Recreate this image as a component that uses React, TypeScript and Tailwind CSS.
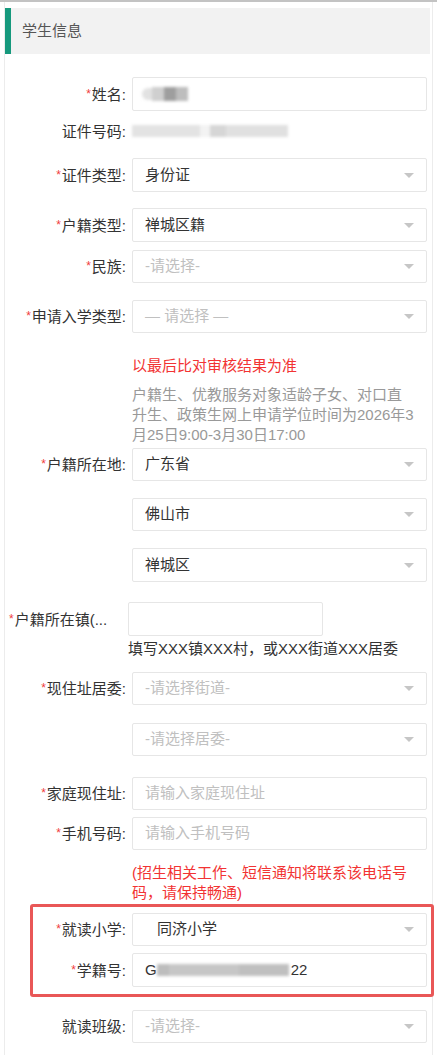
import React from "react";

const F = "font-['Liberation_Sans','Noto_Sans_CJK_SC',sans-serif]";

function Arrow() {
  return (
    <div className="ml-auto mr-[12px] w-0 h-0 border-l-[5px] border-r-[5px] border-t-[5px] border-l-transparent border-r-transparent border-t-[#c6c6c6]" />
  );
}

function Label({ text, req = true, w }: { text: string; req?: boolean; w: string }) {
  return (
    <div className={`${w} shrink-0 text-right pr-[6px] text-[15px] text-[#333] leading-none whitespace-nowrap`}>
      {req && <span className="text-[#f03c3c] text-[12px] relative top-[-2px] mr-[1px]">*</span>}
      {text}:
    </div>
  );
}

function Select({ value, placeholder, pl = "pl-[12px]", h = "h-[33px]" }: { value?: string; placeholder?: string; pl?: string; h?: string }) {
  return (
    <div className={`w-[295px] ${h} border border-[#e6e6e6] rounded-[2px] bg-white flex items-center ${pl} text-[15px]`}>
      {value ? <span className="text-[#333]">{value}</span> : <span className="text-[#c0c0c0]">{placeholder}</span>}
      <Arrow />
    </div>
  );
}

function Input({ value, placeholder, children, h = "h-[33px]" }: { value?: string; placeholder?: string; children?: React.ReactNode; h?: string }) {
  return (
    <div className={`w-[295px] ${h} border border-[#e6e6e6] rounded-[2px] bg-white flex items-center pl-[12px] text-[15px]`}>
      {children ? children : value ? <span className="text-[#333]">{value}</span> : <span className="text-[#c0c0c0]">{placeholder}</span>}
    </div>
  );
}

export default function App() {
  const W = "w-[127px]";
  const WB = "w-[99px]";
  return (
    <div className={`${F} w-[437px] min-h-[1055px] bg-white`}>
      <div className="h-[2px] bg-[#c3c3c3]" />
      <div className="ml-[4px] w-[429px] border-l border-r border-[#ececec] pt-[6px] pb-[12px]">
        {/* header */}
        <div className="w-[425px] h-[46px] bg-[#f2f2f2] border-l-[6px] border-[#16997d] flex items-center pl-[11px] text-[15px] text-[#555]">
          学生信息
        </div>

        {/* 姓名 */}
        <div className="mt-[23px] flex items-center">
          <Label text="姓名" w={W} />
          <Input h="h-[34px]">
            <div className="flex items-center blur-[1.5px] ml-[-3px]">
              <div className="w-[10px] h-[12px] bg-[#e2e2e2] rounded-l-full" />
              <div className="w-[12px] h-[14px] bg-[#cfcfcf]" />
              <div className="w-[12px] h-[14px] bg-[#9e9e9e]" />
              <div className="w-[12px] h-[14px] bg-[#bdbdbd]" />
            </div>
          </Input>
        </div>

        {/* 证件号码 */}
        <div className="mt-[10px] h-[20px] flex items-center">
          <Label text="证件号码" req={false} w={W} />
          <div className="flex items-center blur-[1.5px]">
            <div className="w-[68px] h-[12px] bg-[#e3e3e3]" />
            <div className="w-[10px] h-[12px] bg-[#f3f3f3]" />
            <div className="w-[16px] h-[12px] bg-[#d6d6d6]" />
            <div className="w-[62px] h-[12px] bg-[#e0e0e0]" />
          </div>
        </div>

        {/* 证件类型 */}
        <div className="mt-[17px] flex items-center">
          <Label text="证件类型" w={W} />
          <Select value="身份证" h="h-[34px]" />
        </div>

        {/* 户籍类型 */}
        <div className="mt-[16px] flex items-center">
          <Label text="户籍类型" w={W} />
          <Select value="禅城区籍" h="h-[34px]" />
        </div>

        {/* 民族 */}
        <div className="mt-[8px] flex items-center">
          <Label text="民族" w={W} />
          <Select placeholder="-请选择-" />
        </div>

        {/* 申请入学类型 */}
        <div className="mt-[17px] flex items-center">
          <Label text="申请入学类型" w={W} />
          <Select placeholder="— 请选择 —" />
        </div>

        <div className="mt-[23px] pl-[127px] text-[15px] leading-[20px]">
          <div className="text-[#f23333]">以最后比对审核结果为准</div>
          <div className="mt-[9px] text-[#999] w-[283px]">
            户籍生、优教服务对象适龄子女、对口直升生、政策生网上申请学位时间为2026年3月25日9:00-3月30日17:00
          </div>
        </div>

        {/* 户籍所在地 */}
        <div className="mt-[3px] flex items-center">
          <Label text="户籍所在地" w={W} />
          <Select value="广东省" />
        </div>
        <div className="mt-[17px] flex items-center pl-[127px]">
          <Select value="佛山市" />
        </div>
        <div className="mt-[17px] flex items-center pl-[127px]">
          <Select value="禅城区" h="h-[34px]" />
        </div>

        {/* 户籍所在镇 */}
        <div className="mt-[20px] flex items-center">
          <div className="w-[123px] shrink-0 pl-[4px] text-[15px] text-[#333] leading-none whitespace-nowrap">
            <span className="text-[#f03c3c] text-[12px] relative top-[-2px] mr-[1px]">*</span>
            户籍所在镇(...
          </div>
          <div className="w-[195px] h-[34px] border border-[#e6e6e6] rounded-[2px] bg-white" />
        </div>
        <div className="mt-[3px] pl-[123px] text-[15px] leading-[20px] text-[#333]">
          填写XXX镇XXX村，或XXX街道XXX居委
        </div>

        {/* 现住址居委 */}
        <div className="mt-[13px] flex items-center">
          <Label text="现住址居委" w={W} />
          <Select placeholder="-请选择街道-" />
        </div>
        <div className="mt-[18px] flex items-center pl-[127px]">
          <Select placeholder="-请选择居委-" />
        </div>

        {/* 家庭现住址 */}
        <div className="mt-[21px] flex items-center">
          <Label text="家庭现住址" w={W} />
          <Input placeholder="请输入家庭现住址" />
        </div>

        {/* 手机号码 */}
        <div className="mt-[7px] flex items-center">
          <Label text="手机号码" w={W} />
          <Input placeholder="请输入手机号码" />
        </div>
        <div className="mt-[13px] pl-[127px] w-[414px] text-[15px] leading-[20px] text-[#f23333]">
          (招生相关工作、短信通知将联系该电话号码，请保持畅通)
        </div>

        {/* red box */}
        <div className="mt-[1px] ml-[25px] w-[404px] border-[3px] border-[#e95757] rounded-[3px] pt-[6px] pb-[7px]">
          <div className="flex items-center">
            <Label text="就读小学" w={WB} />
            <Select value="同济小学" pl="pl-[24px]" />
          </div>
          <div className="mt-[7px] flex items-center">
            <Label text="学籍号" w={WB} />
            <Input h="h-[34px]">
              <span className="text-[#333]">G</span>
              <div className="flex items-center blur-[1.5px]">
                <div className="w-[12px] h-[12px] bg-[#bdbdbd]" />
                <div className="w-[70px] h-[12px] bg-[#c6c6c6]" />
                <div className="w-[50px] h-[12px] bg-[#bfbfbf]" />
              </div>
              <span className="text-[#333] ml-[2px]">22</span>
            </Input>
          </div>
        </div>

        {/* 就读班级 */}
        <div className="mt-[13px] flex items-center">
          <Label text="就读班级" req={false} w={W} />
          <Select placeholder="-请选择-" />
        </div>
      </div>
    </div>
  );
}
